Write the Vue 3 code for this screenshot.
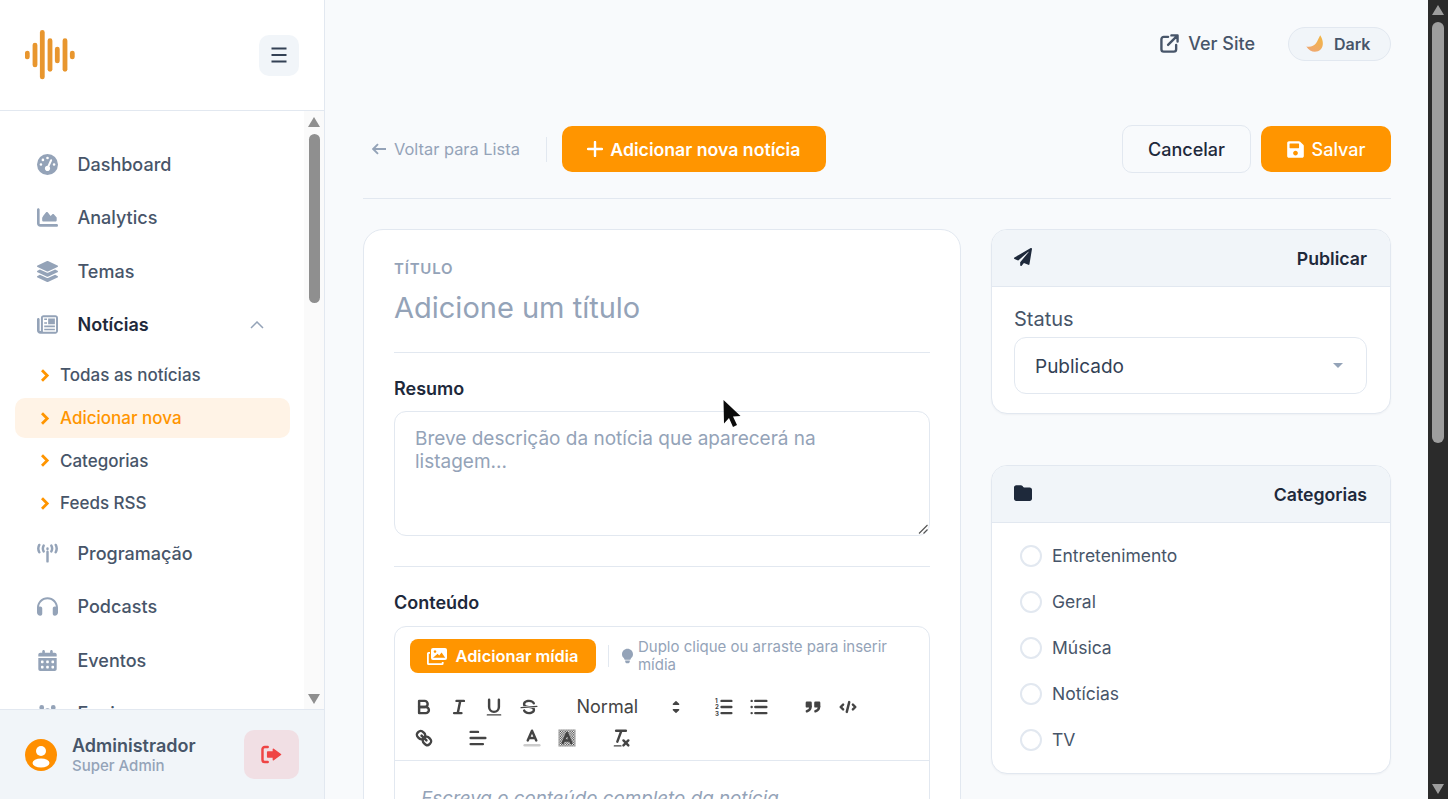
<script setup>
const navTop = [
  {
    label: "Dashboard",
    box: "0 0 512 512",
    d: "M0 256a256 256 0 1 1 512 0A256 256 0 1 1 0 256zM288 96a32 32 0 1 0 -64 0 32 32 0 1 0 64 0zM256 416c35.3 0 64-28.7 64-64c0-17.4-6.9-33.1-18.1-44.6L366 161.7c5.3-12.1-.2-26.3-12.3-31.6s-26.3 .2-31.6 12.3L257.9 288c-.6 0-1.3 0-1.9 0c-35.3 0-64 28.7-64 64s28.7 64 64 64zM176 144a32 32 0 1 0 -64 0 32 32 0 1 0 64 0zM96 288a32 32 0 1 0 0-64 32 32 0 1 0 0 64zm352-32a32 32 0 1 0 -64 0 32 32 0 1 0 64 0z",
  },
  {
    label: "Analytics",
    box: "0 0 512 512",
    d: "M64 64c0-17.7-14.3-32-32-32S0 46.3 0 64V400c0 44.2 35.8 80 80 80H480c17.7 0 32-14.3 32-32s-14.3-32-32-32H80c-8.8 0-16-7.2-16-16V64zM128 352H448c17.7 0 32-14.3 32-32V256l-70-80c-10-11-26-11-36 0l-42 42-72-90c-10-12-28-12-38 0l-64 82-32 50V320c0 17.7 14.3 32 32 32z",
  },
  {
    label: "Temas",
    box: "0 0 512 512",
    d: "M12.41 148.02l232.94 105.67c6.8 3.09 14.49 3.09 21.29 0l232.94-105.67c16.55-7.51 16.55-32.52 0-40.03L266.65 2.31a25.607 25.607 0 0 0-21.29 0L12.41 107.98c-16.55 7.51-16.55 32.53 0 40.04zm487.18 88.28l-58.09-26.33-161.64 73.27c-7.56 3.43-15.59 5.17-23.86 5.17s-16.29-1.74-23.86-5.17L70.51 209.97l-58.1 26.33c-16.55 7.5-16.55 32.5 0 40l232.94 105.59c6.8 3.08 14.49 3.08 21.29 0L499.59 276.3c16.55-7.5 16.55-32.5 0-40zm0 127.8l-57.87-26.23-161.86 73.37c-7.56 3.43-15.59 5.17-23.86 5.17s-16.29-1.74-23.86-5.17L70.29 337.87 12.41 364.1c-16.55 7.5-16.55 32.5 0 40l232.94 105.59c6.8 3.08 14.49 3.08 21.29 0L499.59 404.1c16.55-7.5 16.55-32.5 0-40z",
  },
];

const newsIcon =
  "M96 96c0-35 29-64 64-64h288c35 0 64 29 64 64v320c0 35-29 64-64 64H80c-44 0-80-36-80-80V128c0-18 14-32 32-32s32 14 32 32v272c0 9 7 16 16 16s16-7 16-16V96zM144 80H464V432H144ZM272 112H436V248H272ZM176 112H244V148H176ZM176 200H244V240H176ZM176 280H436V320H176ZM176 358H436V398H176Z";

const subItems = [
  { label: "Todas as notícias" },
  { label: "Adicionar nova", active: true },
  { label: "Categorias" },
  { label: "Feeds RSS" },
];

const navBottom = [
  {
    label: "Podcasts",
    box: "0 0 512 512",
    d: "M256 80C149.9 80 62.4 159.4 49.6 262c9.4-3.8 19.6-6 30.4-6c26.5 0 48 21.5 48 48V432c0 26.5-21.5 48-48 48c-44.2 0-80-35.8-80-80V384 336 288C0 146.6 114.6 32 256 32s256 114.6 256 256v48 48 16c0 44.2-35.8 80-80 80c-26.5 0-48-21.5-48-48V304c0-26.5 21.5-48 48-48c10.8 0 21 2.1 30.4 6C449.6 159.4 362.1 80 256 80z",
  },
  {
    label: "Eventos",
    box: "0 0 448 512",
    d: "M128 0c17.7 0 32 14.3 32 32V64H288V32c0-17.7 14.3-32 32-32s32 14.3 32 32V64h48c26.5 0 48 21.5 48 48v48H0V112C0 85.5 21.5 64 48 64H96V32c0-17.7 14.3-32 32-32zM0 192H448V464c0 26.5-21.5 48-48 48H48c-26.5 0-48-21.5-48-48V192zm64 80v32c0 8.8 7.2 16 16 16h32c8.8 0 16-7.2 16-16V272c0-8.8-7.2-16-16-16H80c-8.8 0-16 7.2-16 16zm128 0v32c0 8.8 7.2 16 16 16h32c8.8 0 16-7.2 16-16V272c0-8.8-7.2-16-16-16H208c-8.8 0-16 7.2-16 16zm144-16c-8.8 0-16 7.2-16 16v32c0 8.8 7.2 16 16 16h32c8.8 0 16-7.2 16-16V272c0-8.8-7.2-16-16-16H336zM64 400v32c0 8.8 7.2 16 16 16h32c8.8 0 16-7.2 16-16V400c0-8.8-7.2-16-16-16H80c-8.8 0-16 7.2-16 16zm144-16c-8.8 0-16 7.2-16 16v32c0 8.8 7.2 16 16 16h32c8.8 0 16-7.2 16-16V400c0-8.8-7.2-16-16-16H208zm112 16v32c0 8.8 7.2 16 16 16h32c8.8 0 16-7.2 16-16V400c0-8.8-7.2-16-16-16H336c-8.8 0-16 7.2-16 16z",
  },
  {
    label: "Equipe",
    box: "0 0 640 512",
    d: "M144 0a72 72 0 1 1 0 144A72 72 0 1 1 144 0zM496 0a72 72 0 1 1 0 144A72 72 0 1 1 496 0zM320 96a90 90 0 1 1 0 180A90 90 0 1 1 320 96z",
  },
];

const categories = ["Entretenimento", "Geral", "Música", "Notícias", "TV"];
const logoBars = [
  { x: 27.3, y: 50.7, h: 8.6 },
  { x: 35, y: 42.7, h: 24.6 },
  { x: 42.3, y: 30, h: 49.3 },
  { x: 50, y: 38.3, h: 33.4 },
  { x: 57.3, y: 46.7, h: 16.6 },
  { x: 65, y: 38.3, h: 33.4 },
  { x: 72.3, y: 50.7, h: 8.6 },
];
</script>

<template>
  <div class="page">
    <aside class="sidebar">
      <div class="side-head">
        <svg class="logo" viewBox="25 30 50 50" width="50" height="50">
          <rect v-for="b in logoBars" :key="b.x" :x="b.x - 2.4" :y="b.y" width="4.8" :height="b.h" rx="2.4" fill="#e8962e" />
        </svg>
        <button class="menu-btn">
          <svg viewBox="0 0 16 16" width="16" height="16" fill="none" stroke="#334155" stroke-width="2">
            <path d="M.5 1.5h15M.5 8h15M.5 14.5h15" />
          </svg>
        </button>
      </div>

      <div class="side-scroll">
        <nav class="nav">
          <a v-for="item in navTop" :key="item.label" class="nav-item">
            <span class="nav-icon"><svg :viewBox="item.box" fill="currentColor"><path :d="item.d" /></svg></span>
            {{ item.label }}
          </a>
          <a class="nav-item open">
            <span class="nav-icon"><svg viewBox="0 0 512 512" fill="currentColor" fill-rule="evenodd"><path :d="newsIcon" /></svg></span>
            Notícias
            <svg class="caret-up" viewBox="0 0 14 8" width="14" height="8" fill="none" stroke="#94a3b8" stroke-width="1.5">
              <path d="M1 7l6-6 6 6" />
            </svg>
          </a>
          <div class="sub-list">
            <a v-for="s in subItems" :key="s.label" class="sub-item" :class="{ active: s.active }">
              <svg viewBox="0 0 10 13" width="10" height="13" fill="none" stroke="#ff9500" stroke-width="2.8">
                <path d="M2 1.2l5.2 5.3L2 11.8" />
              </svg>
              {{ s.label }}
            </a>
          </div>
          <a class="nav-item">
            <span class="nav-icon">
              <svg viewBox="0 0 24 24" fill="none" stroke="currentColor" stroke-width="2.8" stroke-linecap="round">
                <path d="M12 10v11M12 6.2v.6M7.6 3c-1.1 2-1.1 4.6 0 6.6M16.4 3c1.1 2 1.1 4.6 0 6.6M2.6 2.2C1.2 4.8 1.2 8 2.6 10.6M21.4 2.2c1.4 2.6 1.4 5.8 0 8.4" />
              </svg>
            </span>
            Programação
          </a>
          <a v-for="item in navBottom" :key="item.label" class="nav-item">
            <span class="nav-icon"><svg :viewBox="item.box" fill="currentColor"><path :d="item.d" /></svg></span>
            {{ item.label }}
          </a>
        </nav>
        <div class="side-bar">
          <i class="tri up"></i>
          <div class="side-thumb"></div>
          <div class="grow"></div>
          <i class="tri down"></i>
        </div>
      </div>

      <div class="side-foot">
        <svg class="avatar" viewBox="0 0 32 32" width="32" height="32">
          <defs>
            <clipPath id="av"><circle cx="16" cy="16" r="16" /></clipPath>
          </defs>
          <circle cx="16" cy="16" r="16" fill="#ff8f00" />
          <g clip-path="url(#av)" fill="#fff">
            <circle cx="16" cy="12" r="5" />
            <ellipse cx="16" cy="24" rx="8.5" ry="4.6" />
          </g>
        </svg>
        <div class="user">
          <div class="user-name">Administrador</div>
          <div class="user-role">Super Admin</div>
        </div>
        <button class="logout">
          <svg viewBox="0 0 22 20" width="21" height="19" fill="none" stroke="#ef4444" stroke-width="2.6" stroke-linejoin="round">
            <path d="M7 2H4a2.5 2.5 0 0 0-2.5 2.5v11A2.5 2.5 0 0 0 4 18h3" stroke-linecap="round" />
            <path d="M13 4.5L20.5 10 13 15.5V12.5H7v-5h6z" fill="#ef4444" stroke-width="1.6" />
          </svg>
        </button>
      </div>
    </aside>

    <main class="main">
      <div class="top-bar">
        <a class="site-link">
          <svg viewBox="0 0 20 20" width="19" height="19" fill="none" stroke="#475569" stroke-width="2.5" stroke-linecap="round" stroke-linejoin="round">
            <path d="M8.5 3H4a2.5 2.5 0 0 0-2.5 2.5V16A2.5 2.5 0 0 0 4 18.5h10.5A2.5 2.5 0 0 0 17 16v-4.5" />
            <path d="M8.5 11.5L18 2M12 1.5h6.5V8" />
          </svg>
          Ver Site
        </a>
        <button class="theme-pill">
          <svg viewBox="0 0 18 18" width="18" height="18">
            <defs>
              <linearGradient id="moon" x1="0.8" y1="0" x2="0.2" y2="1">
                <stop offset="0" stop-color="#f2b544" />
                <stop offset="1" stop-color="#efa774" />
              </linearGradient>
            </defs>
            <path d="M14.2 .3C17.6 5.5 17.8 11.4 14.6 14.6 11 18 4 17.8 .3 11.6 4.8 12.4 8 11 9.8 8.6 11.6 6.2 12.6 3.2 14.2 .3Z" fill="url(#moon)" />
          </svg>
          Dark
        </button>
      </div>

      <div class="action-row">
        <a class="back">
          <svg viewBox="0 0 14 12" width="14" height="12" fill="none" stroke="#94a3b8" stroke-width="1.9">
            <path d="M14 6H1.5M6 1.2L1.2 6 6 10.8" />
          </svg>
          Voltar para Lista
        </a>
        <span class="v-rule"></span>
        <button class="btn-orange add">
          <svg viewBox="0 0 16 16" width="16" height="16" fill="none" stroke="#fff" stroke-width="2.4" stroke-linecap="round">
            <path d="M8 1v14M1 8h14" />
          </svg>
          Adicionar nova notícia
        </button>
        <div class="grow"></div>
        <button class="btn-cancel">Cancelar</button>
        <button class="btn-orange save">
          <svg viewBox="0 0 448 512" width="17" height="19" fill="#fff">
            <path d="M433.941 129.941l-83.882-83.882A48 48 0 0 0 316.118 32H48C21.49 32 0 53.49 0 80v352c0 26.51 21.49 48 48 48h352c26.51 0 48-21.49 48-48V163.882a48 48 0 0 0-14.059-33.941zM224 416c-35.346 0-64-28.654-64-64 0-35.346 28.654-64 64-64s64 28.654 64 64c0 35.346-28.654 64-64 64zm96-304.52V212c0 6.627-5.373 12-12 12H76c-6.627 0-12-5.373-12-12V108c0-6.627 5.373-12 12-12h228.52c3.183 0 6.235 1.264 8.485 3.515l3.48 3.48A11.996 11.996 0 0 1 320 111.48z" />
          </svg>
          Salvar
        </button>
      </div>

      <div class="columns">
        <section class="editor-card">
          <div class="field-label">TÍTULO</div>
          <div class="title-ph">Adicione um título</div>
          <hr class="rule first" />
          <div class="block-label tight">Resumo</div>
          <div class="textarea">
            Breve descrição da notícia que aparecerá na listagem...
            <svg class="grip" viewBox="0 0 10 10" width="10" height="10" fill="none" stroke="#555" stroke-width="1.1">
              <path d="M1 9.5L9.5 1M5.5 9.5L9.5 5.5" />
            </svg>
          </div>
          <hr class="rule second" />
          <div class="block-label">Conteúdo</div>
          <div class="editor">
            <div class="media-row">
              <button class="btn-orange media">
                <svg viewBox="0 0 20 17" width="20" height="17" fill="#fff">
                  <path fill-rule="evenodd" d="M6 0h12a2 2 0 0 1 2 2v8a2 2 0 0 1-2 2H6a2 2 0 0 1-2-2V2a2 2 0 0 1 2-2zm0 9.8h12.2l-3.6-5.4-2.4 3-1.6-1.6zM8 2.2a1.3 1.3 0 1 0 .01 0z" />
                  <path d="M0 5.5A1.5 1.5 0 0 1 1.5 4H3v1.8H1.8v9.4h13V14H16.6v1.5A1.5 1.5 0 0 1 15.1 17H1.5A1.5 1.5 0 0 1 0 15.5z" />
                </svg>
                Adicionar mídia
              </button>
              <span class="media-rule"></span>
              <svg class="bulb" viewBox="0 0 384 512" width="11" height="16" fill="#94a3b8">
                <path d="M192 0C86 0 0 86 0 192c0 52 20 88 46 120 20 24 38 48 46 72h200c8-24 26-48 46-72 26-32 46-68 46-120C384 86 298 0 192 0zM112 416h160v32c0 35-29 64-64 64h-32c-35 0-64-29-64-64z" />
              </svg>
              <span class="hint">Duplo clique ou arraste para inserir mídia</span>
            </div>

            <div class="ql-toolbar">
              <span class="ql-group">
                <button class="ql-btn"><svg viewBox="0 0 18 18"><path class="s" d="M5,4H9.5A2.5,2.5,0,0,1,12,6.5v0A2.5,2.5,0,0,1,9.5,9H5A0,0,0,0,1,5,9V4A0,0,0,0,1,5,4Z" /><path class="s" d="M5,9h5.5A2.5,2.5,0,0,1,13,11.5v0A2.5,2.5,0,0,1,10.5,14H5a0,0,0,0,1,0,0V9A0,0,0,0,1,5,9Z" /></svg></button>
                <button class="ql-btn"><svg viewBox="0 0 18 18"><path class="s" d="M7 4H13M5 14H11M8 14L10 4" /></svg></button>
                <button class="ql-btn"><svg viewBox="0 0 18 18"><path class="s" d="M5,3V9a4.012,4.012,0,0,0,4,4H9a4.012,4.012,0,0,0,4-4V3" /><rect class="f" x="3" y="15" width="12" height="1" rx=".5" /></svg></button>
                <button class="ql-btn"><svg viewBox="0 0 18 18"><path class="s thin" d="M15.5 8.5L2.5 9.5" /><path class="f" d="M9.007,8C6.542,7.791,6,7.519,6,6.5,6,5.792,7.283,5,9,5c1.571,0,2.765.679,2.969,1.309a1,1,0,0,0,1.9-.617C13.356,4.106,11.354,3,9,3,6.2,3,4,4.538,4,6.5a3.2,3.2,0,0,0,.5,1.843Z" /><path class="f" d="M8.984,10C11.457,10.208,12,10.479,12,11.5c0,.708-1.283,1.5-3,1.5-1.571,0-2.765-.679-2.969-1.309a1,1,0,1,0-1.9.617C4.644,13.894,6.646,15,9,15c2.8,0,5-1.538,5-3.5a3.2,3.2,0,0,0-.5-1.843Z" /></svg></button>
              </span>
              <span class="ql-group picker">
                Normal
                <svg viewBox="0 0 18 18" width="24" height="24"><polygon class="s thin f" points="7 11 9 13 11 11 7 11" /><polygon class="s thin f" points="7 7 9 5 11 7 7 7" /></svg>
              </span>
              <span class="ql-group">
                <button class="ql-btn"><svg viewBox="0 0 18 18"><path class="s" d="M7 4H15M7 9H15M7 14H15" /><text x="1.6" y="6" class="num">1</text><text x="1.6" y="11" class="num">2</text><text x="1.6" y="16" class="num">3</text></svg></button>
                <button class="ql-btn"><svg viewBox="0 0 18 18"><path class="s" d="M6 4H15M6 9H15M6 14H15M3 4H3M3 9H3M3 14H3" /></svg></button>
              </span>
              <span class="ql-group">
                <button class="ql-btn"><svg viewBox="0 0 18 18"><rect class="s f" x="4" y="5.5" width="3" height="3" /><rect class="s f" x="11" y="5.5" width="3" height="3" /><path class="s" d="M7,8.5C7,10.9,5.5,12,4,12.5" /><path class="s" d="M14,8.5C14,10.9,12.5,12,11,12.5" /></svg></button>
                <button class="ql-btn"><svg viewBox="0 0 18 18"><path class="s" d="M5 7L3 9 5 11M13 7L15 9 13 11M10 5L8 13" /></svg></button>
              </span>
              <span class="ql-group">
                <button class="ql-btn"><svg viewBox="0 0 18 18"><path class="s" d="M7 7L11 11" /><path class="s" d="M8.9,4.577a3.476,3.476,0,0,1,.36,4.679A3.476,3.476,0,0,1,4.577,8.9C3.185,7.5,2.035,6.4,4.217,4.217S7.5,3.185,8.9,4.577Z" /><path class="s" d="M13.423,9.1a3.476,3.476,0,0,0-4.679-.36,3.476,3.476,0,0,0,.36,4.679c1.392,1.392,2.5,2.542,4.679.36S14.815,10.5,13.423,9.1Z" /></svg></button>
              </span>
              <span class="ql-group">
                <button class="ql-btn"><svg viewBox="0 0 18 18"><path class="s" d="M3 9H15M3 14H13M3 4H9" /></svg></button>
              </span>
              <span class="ql-group">
                <button class="ql-btn"><svg viewBox="0 0 18 18"><path class="s light" d="M3 15H15" /><path class="s" d="M5.5 11L9 3 12.5 11M11.63 9H6.37" /></svg></button>
                <button class="ql-btn"><svg viewBox="0 0 18 18"><defs><pattern id="hatch" width="2" height="2" patternUnits="userSpaceOnUse"><rect width="1" height="1" fill="#444" /><rect x="1" y="1" width="1" height="1" fill="#444" /></pattern></defs><rect x="2" y="2" width="14" height="14" fill="url(#hatch)" /><path class="s" d="M5.5 13L9 5 12.5 13M11.63 11H6.37" /></svg></button>
              </span>
              <span class="ql-group">
                <button class="ql-btn"><svg viewBox="0 0 18 18"><path class="s" d="M5 3H13M6 12L9.35 3M11 11L15 15M15 11L11 15" /><rect class="f" x="3" y="15" width="6.5" height="1" rx=".5" /></svg></button>
              </span>
            </div>

            <div class="ql-body">Escreva o conteúdo completo da notícia...</div>
          </div>
        </section>

        <div class="side-col">
          <section class="panel">
            <header class="panel-head">
              <svg viewBox="0 0 512 512" width="18" height="18" fill="#1e293b">
                <path d="M476 3.2L12.5 270.6c-18.1 10.4-15.8 35.6 2.2 43.2L121 358.4l287.3-253.2c5.5-4.9 13.3 2.6 8.6 8.3L176 407v80.5c0 23.6 28.5 32.9 42.5 15.8L282 426l124.6 52.2c14.2 6 30.4-2.9 33-18.2l72-432C515 7.8 493.3-6.8 476 3.2z" />
              </svg>
              <span>Publicar</span>
            </header>
            <div class="panel-body publish">
              <div class="status-label">Status</div>
              <div class="select">
                <span class="sel-value">Publicado</span>
                <i class="sel-caret"></i>
              </div>
            </div>
          </section>

          <section class="panel">
            <header class="panel-head">
              <svg viewBox="0 0 512 512" width="18" height="18" fill="#1e293b">
                <path d="M64 480H448c35.3 0 64-28.7 64-64V160c0-35.3-28.7-64-64-64H288c-10.1 0-19.6-4.7-25.6-12.8L243.2 58.4C231.1 42.3 212.1 32 192 32H64C28.7 32 0 60.7 0 96V416c0 35.3 28.7 64 64 64z" />
              </svg>
              <span>Categorias</span>
            </header>
            <div class="panel-body cats">
              <label v-for="c in categories" :key="c" class="cat">
                <i class="radio"></i>
                <span class="cat-text">{{ c }}</span>
              </label>
            </div>
          </section>
        </div>
      </div>
    </main>

    <div class="page-bar">
      <i class="tri up light"></i>
      <div class="page-thumb"></div>
      <div class="grow"></div>
      <i class="tri down light"></i>
    </div>

    <svg class="pointer" viewBox="0 0 20 28" width="20" height="28">
      <path d="M.5 0L17.5 16 10 16.5 14 25 10 27 6 18 1 23.5z" fill="#0b0b0b" />
    </svg>
  </div>
</template>

<style>
html,
body {
  margin: 0;
  overflow: hidden;
}
</style>

<style scoped>
* {
  box-sizing: border-box;
}
.page {
  position: relative;
  display: flex;
  height: 799px;
  overflow: hidden;
  font-family: Inter, "Noto Sans", sans-serif;
  background: #f8fafc;
  color: #475569;
}
button {
  font-family: inherit;
  border: 0;
  cursor: pointer;
}
.grow {
  flex: 1;
}

/* sidebar */
.sidebar {
  width: 325px;
  flex: none;
  display: flex;
  flex-direction: column;
  background: #fff;
  border-right: 1px solid #e2e8f0;
}
.side-head {
  height: 111px;
  flex: none;
  display: flex;
  align-items: center;
  justify-content: space-between;
  padding: 0 25px;
  border-bottom: 1px solid #e2e8f0;
}
.menu-btn {
  width: 40px;
  height: 41px;
  border-radius: 10px;
  background: #f1f5f9;
  display: flex;
  align-items: center;
  justify-content: center;
  padding: 0;
}
.side-scroll {
  flex: 1;
  min-height: 0;
  display: flex;
  overflow: hidden;
}
.nav {
  flex: 1;
  padding-top: 26.6px;
  min-width: 0;
}
.nav-item {
  display: flex;
  align-items: center;
  height: 53.5px;
  padding-left: 37px;
  font-size: 18px;
  font-weight: 500;
  color: #475569;
}
.nav-icon {
  width: 21px;
  height: 21px;
  margin-right: 19.5px;
  color: #94a3b8;
  display: flex;
  justify-content: center;
}
.nav-icon svg {
  width: 100%;
  height: 100%;
}
.nav-item.open {
  color: #1e293b;
  font-weight: 600;
}
.caret-up {
  margin-left: auto;
  margin-right: 40px;
}
.sub-list {
  padding: 3.8px 0 0.6px 15px;
}
.sub-item {
  display: flex;
  align-items: center;
  gap: 10px;
  height: 40px;
  margin-bottom: 2.7px;
  width: 275px;
  padding-left: 25px;
  border-radius: 10px;
  font-size: 17px;
  font-weight: 500;
  color: #475569;
}
.sub-item.active {
  background: #fff3e6;
  color: #ff9500;
}
.side-bar {
  width: 20px;
  flex: none;
  background: #fafafa;
  display: flex;
  flex-direction: column;
  align-items: center;
  padding: 6px 0 5px;
}
.side-thumb {
  width: 11px;
  height: 169px;
  margin-top: 7px;
  border-radius: 6px;
  background: #8f8f8f;
}
.tri {
  width: 0;
  height: 0;
  border-left: 6.5px solid transparent;
  border-right: 6.5px solid transparent;
}
.tri.up {
  border-bottom: 10px solid #8f8f8f;
}
.tri.down {
  border-top: 10px solid #8f8f8f;
}
.tri.up.light {
  border-bottom-color: #9e9e9e;
}
.tri.down.light {
  border-top-color: #9e9e9e;
}
.side-foot {
  height: 90px;
  flex: none;
  display: flex;
  align-items: center;
  padding: 0 25px;
  background: #f1f5f9;
  border-top: 1px solid #e2e8f0;
}
.user {
  margin-left: 15px;
  flex: 1;
}
.user-name {
  font-size: 18px;
  font-weight: 600;
  line-height: 24px;
  color: #475569;
}
.user-role {
  font-size: 15px;
  line-height: 18px;
  margin-top: -1px;
  font-weight: 500;
  color: #94a3b8;
}
.logout {
  width: 55px;
  height: 49px;
  border-radius: 10px;
  background: #f1dfe4;
  display: flex;
  align-items: center;
  justify-content: center;
  padding: 0;
}

/* main */
.main {
  flex: 1;
  min-width: 0;
  padding: 27px 37px 0 38px;
}
.top-bar {
  display: flex;
  align-items: center;
  justify-content: flex-end;
  height: 34px;
}
.site-link {
  display: flex;
  align-items: center;
  gap: 9px;
  font-size: 18px;
  font-weight: 500;
  color: #475569;
  margin-right: 33px;
  margin-bottom: 1px;
}
.theme-pill {
  width: 103px;
  height: 34px;
  border-radius: 17px;
  background: #f1f5f9;
  border: 1px solid #e2e8f0;
  font-size: 16px;
  font-weight: 600;
  color: #475569;
  display: flex;
  align-items: center;
  gap: 10px;
  padding: 0 0 0 17px;
}
.action-row {
  display: flex;
  align-items: center;
  height: 73px;
  margin-top: 65px;
  padding-bottom: 26px;
  padding-left: 9px;
  border-bottom: 1px solid #e2e8f0;
}
.back {
  display: flex;
  align-items: center;
  gap: 8px;
  font-size: 16.4px;
  color: #94a3b8;
}
.v-rule {
  width: 1px;
  height: 25px;
  background: #e2e8f0;
  margin: 0 15px 0 26px;
}
.btn-orange {
  background: #ff9500;
  color: #fff;
  display: flex;
  align-items: center;
  font-weight: 600;
  padding: 0;
}
.add {
  width: 264px;
  height: 46px;
  border-radius: 10px;
  font-size: 17.7px;
  justify-content: center;
  gap: 7px;
}
.btn-cancel {
  width: 129px;
  height: 48px;
  border-radius: 10px;
  background: #f8fafc;
  border: 1px solid #e2e8f0;
  font-size: 18px;
  font-weight: 500;
  color: #1e293b;
  margin-right: 10px;
}
.save {
  width: 130px;
  height: 46px;
  border-radius: 10px;
  font-size: 18px;
  font-weight: 500;
  justify-content: center;
  gap: 8px;
}
.columns {
  display: flex;
  align-items: flex-start;
  gap: 30px;
  margin-top: 30px;
}
.editor-card {
  width: 598px;
  flex: none;
  padding: 30px 30px 0;
  background: #fff;
  border: 1px solid #e2e8f0;
  border-radius: 20px;
}
.field-label {
  font-size: 15px;
  line-height: 18px;
  font-weight: 600;
  letter-spacing: 0.8px;
  color: #94a3b8;
}
.title-ph {
  font-size: 29px;
  line-height: 40px;
  margin-top: 10px;
  color: #94a3b8;
}
.rule {
  border: 0;
  border-top: 1px solid #e2e8f0;
  margin: 0;
}
.rule.first {
  margin-top: 24px;
  margin-bottom: 24px;
}
.rule.second {
  margin-top: 30px;
  margin-bottom: 24px;
}
.block-label {
  font-size: 18px;
  line-height: 24px;
  font-weight: 600;
  color: #1e293b;
  margin-bottom: 11px;
}
.block-label.tight {
  margin-bottom: 10px;
}
.textarea {
  position: relative;
  height: 125px;
  padding: 15px 20px;
  border: 1px solid #e2e8f0;
  border-radius: 12px;
  font-size: 19px;
  line-height: 23px;
  color: #94a3b8;
}
.grip {
  position: absolute;
  right: 1px;
  bottom: 1px;
}
.editor {
  border: 1px solid #e2e8f0;
  border-radius: 12px 12px 0 0;
  min-height: 300px;
}
.media-row {
  display: flex;
  align-items: center;
  padding: 11px 15px 0;
}
.media {
  flex: none;
  width: 186px;
  height: 34px;
  border-radius: 8px;
  font-size: 16.4px;
  justify-content: center;
  gap: 8px;
}
.media-rule {
  width: 1px;
  height: 22px;
  background: #e2e8f0;
  margin: 0 13px 0 12px;
}
.bulb {
  flex: none;
  margin-right: 5px;
}
.hint {
  font-size: 15px;
  line-height: 18px;
  color: #94a3b8;
}
.ql-toolbar {
  display: flex;
  flex-wrap: wrap;
  padding: 17px 11px 7px 11.5px;
  border-bottom: 1px solid #e2e8f0;
}
.ql-group {
  display: flex;
  align-items: center;
  margin-right: 19px;
  height: 31px;
}
.ql-btn {
  width: 35px;
  height: 31px;
  padding: 0;
  background: none;
  display: flex;
  align-items: center;
  justify-content: center;
}
.ql-btn svg {
  width: 22px;
  height: 22px;
}
.s {
  fill: none;
  stroke: #444;
  stroke-width: 2;
  stroke-linecap: round;
  stroke-linejoin: round;
}
.s.thin {
  stroke-width: 1;
}
.s.light {
  stroke: #ccc;
}
.f,
.s.f {
  fill: #444;
}
.num {
  font-size: 5px;
  font-weight: 700;
  fill: #444;
  font-family: Inter, sans-serif;
}
.picker {
  width: 122px;
  font-size: 18px;
  font-weight: 400;
  color: #444;
  padding-left: 11px;
  justify-content: space-between;
}
.ql-body {
  padding: 26px 26px;
  font-size: 18.8px;
  font-style: italic;
  color: #94a3b8;
}

/* right column */
.side-col {
  width: 400px;
  flex: none;
  display: flex;
  flex-direction: column;
  gap: 51px;
}
.panel {
  background: #fff;
  border: 1px solid #e2e8f0;
  border-radius: 16px;
  overflow: hidden;
  box-shadow: 0 1px 2px rgba(15, 23, 42, 0.04);
}
.panel-head {
  height: 57px;
  display: flex;
  align-items: center;
  justify-content: space-between;
  padding: 0 23px 0 22px;
  background: #f1f5f9;
  border-bottom: 1px solid #e2e8f0;
  font-size: 17.7px;
  font-weight: 600;
  color: #1e293b;
}
.panel-head svg {
  margin-top: -3px;
}
.publish {
  padding: 19px 23px 19px 22px;
}
.status-label {
  font-size: 20px;
  line-height: 26px;
  color: #475569;
  margin-bottom: 5px;
}
.select {
  display: flex;
  align-items: center;
  justify-content: space-between;
  height: 57px;
  padding: 0 23px 0 20px;
  border: 1px solid #e2e8f0;
  border-radius: 12px;
  font-size: 19px;
  color: #334155;
}
.sel-value {
  padding-top: 2px;
}
.sel-caret {
  border-left: 5px solid transparent;
  border-right: 5px solid transparent;
  border-top: 5px solid #94a3b8;
}
.cats {
  padding: 10px 0 10px 28px;
}
.cat {
  display: flex;
  align-items: center;
  gap: 10px;
  height: 46px;
  font-size: 17.5px;
  color: #475569;
}
.cat-text {
  margin-top: -1px;
}
.radio {
  width: 22px;
  height: 22px;
  border-radius: 50%;
  border: 2px solid #e2e8f0;
  background: #fff;
}

/* window scrollbar */
.page-bar {
  width: 20px;
  flex: none;
  background: #2b2b2b;
  display: flex;
  flex-direction: column;
  align-items: center;
  padding: 5px 0 5px;
}
.page-thumb {
  width: 12px;
  height: 421px;
  margin-top: 7px;
  border-radius: 6px;
  background: #9e9e9e;
}
.pointer {
  position: absolute;
  left: 723px;
  top: 400px;
}
</style>
